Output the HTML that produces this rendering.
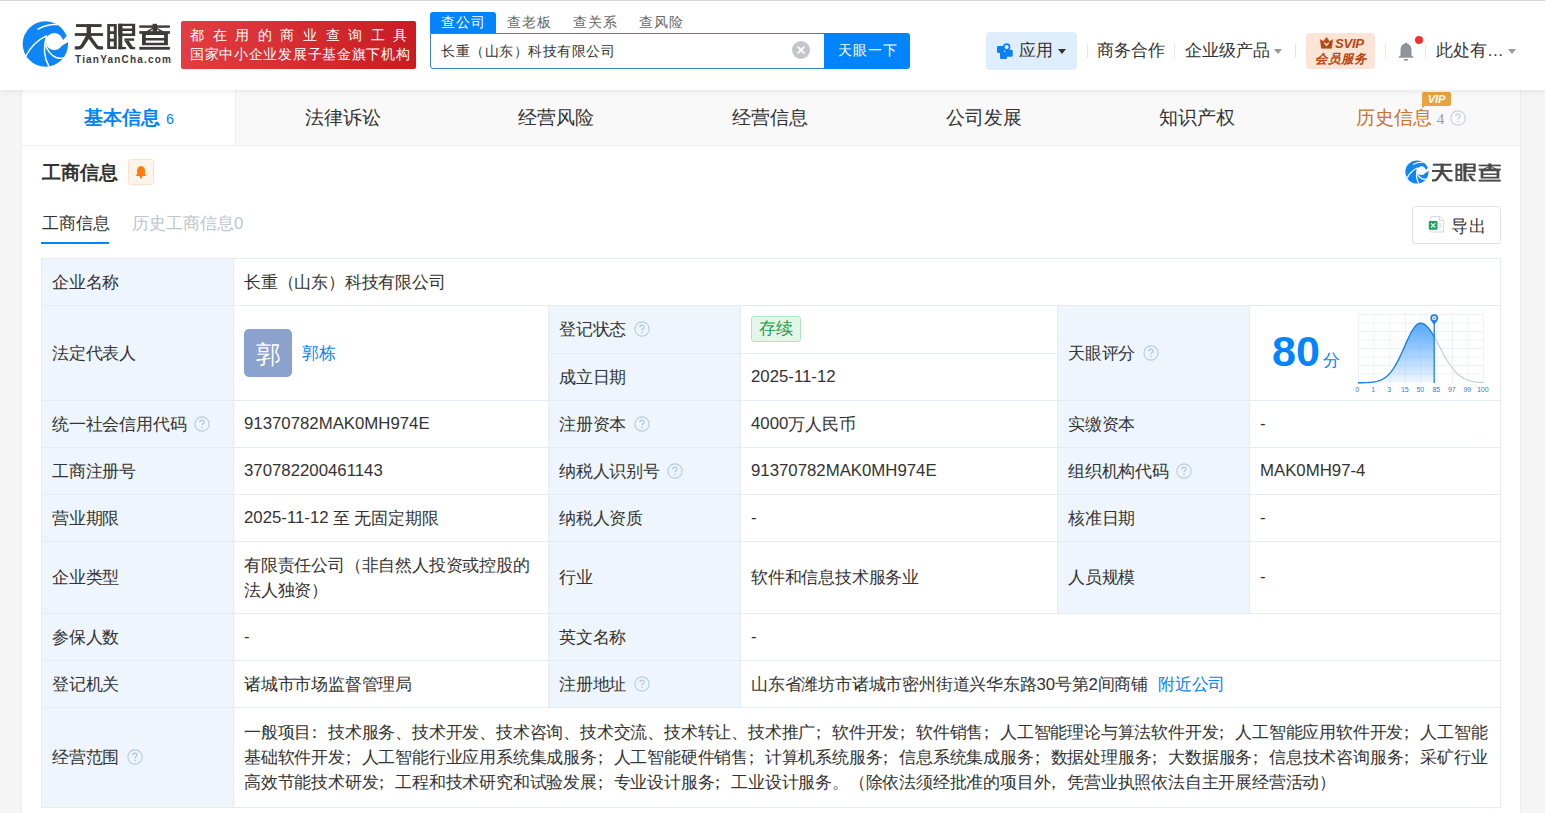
<!DOCTYPE html>
<html><head><meta charset="utf-8">
<style>
*{box-sizing:border-box;margin:0;padding:0}
html,body{width:1545px;height:813px;overflow:hidden}
body{position:relative;background:#f5f5f5;font-family:"Liberation Sans",sans-serif;color:#333}
.a{position:absolute;white-space:nowrap}
#hdr{position:absolute;z-index:5;left:0;top:0;width:1545px;height:90px;background:#fff;border-top:1px solid #d5d5d9;box-shadow:0 2px 6px rgba(0,0,0,.07)}
.sep{position:absolute;width:1px;height:14px;background:#e6e6e6;top:43px}
.caret{position:absolute;width:0;height:0;border-left:4px solid transparent;border-right:4px solid transparent;border-top:5px solid #333}
#card{position:absolute;left:21px;top:90px;width:1500px;height:723px;background:#fff;border-left:1px solid #ececec;border-right:1px solid #ececec}
#tabs{position:absolute;left:22px;top:90px;width:1498px;height:56px;background:#f9f9f9;border-bottom:1px solid #eeeeee}
.tab{position:absolute;top:0;height:56px;width:214px;text-align:center;font-size:19.2px;line-height:56px;color:#333}
.tb{position:absolute;background:#e4ebf3}
.lb{position:absolute;background:#eef5fd}
.c{position:absolute;font-size:16.8px;line-height:25px;color:#333;white-space:nowrap;display:flex;align-items:center;letter-spacing:-0.2px}
.lt{position:relative;top:-1px;letter-spacing:0}
.pl{position:relative;left:-5px}
.pr{position:relative;left:4px}
.q{display:inline-block;width:15px;height:15px;border:1.3px solid #bcd3ec;border-radius:50%;color:#bcd3ec;font-size:11px;line-height:12.5px;text-align:center;margin-left:7px;vertical-align:middle;font-weight:normal}
</style></head><body>

<div id="hdr">
  <!-- logo -->
  <svg class="a" style="left:20px;top:18px" width="51" height="50" viewBox="0 0 51 50"><circle cx="25.4" cy="25" r="22.7" fill="#0f86f7"/>
    <path d="M17.5 10.3 Q27 4.8 37.8 5.6" stroke="#fff" stroke-width="1.5" fill="none"/>
    <circle cx="34.3" cy="22.5" r="8.6" fill="#fff"/>
    <path d="M40.5 18 L43.2 21 L46.3 17.2 L48.6 18.5 L48.9 22.6 L47.7 23.2 L41.5 27 Z" fill="#fff"/>
    <path d="M5.5 37.5 Q13 23 26.8 16.6" stroke="#fff" stroke-width="1.5" fill="none"/>
    <path d="M26.6 17 C23.5 27 23.5 38 29 47.5" stroke="#fff" stroke-width="1.5" fill="none"/>
    <path d="M25.6 25.6 C27 31 31 36 36 38.5 C39 39.6 42 39.6 44.5 38.6" stroke="#fff" stroke-width="1.5" fill="none"/></svg>
  <svg class="a" style="left:70px;top:18px" width="105" height="34" viewBox="0 0 105 34"><g fill="#3e3a39"><rect x="6" y="5.1" width="25.6" height="2.9"/><rect x="4.8" y="14.1" width="28.3" height="2.8"/><rect x="16.6" y="5.1" width="4.4" height="11.8"/><path d="M15.9 16.8 L21 16.8 L13.3 28.2 Q11.6 30.6 9 30.6 L4.8 30.6 L4.8 27.2 L8.6 27.2 Q10 27.2 11 25.6 Z"/><path d="M18.6 19.8 L20.8 16.8 L27.4 26 Q28.4 27.2 30 27.2 L33.1 27.2 L33.1 30.6 L28.6 30.6 Q26.6 30.6 25.2 28.6 Z"/><path fill-rule="evenodd" d="M37.2 5.1 H46.8 V29.9 H37.2 Z M40.1 7.6 V12.2 H43.8 V7.6 Z M40.1 15 V19.8 H43.8 V15 Z M40.1 22.4 V27.6 H43.8 V22.4 Z"/><path fill-rule="evenodd" d="M48.3 4.8 H65.2 V17 H48.3 Z M52.3 6.9 V9.6 H62 V6.9 Z M52.3 12.1 V14.6 H62 V12.1 Z"/><rect x="48.3" y="4.8" width="4" height="25.4"/><rect x="48.3" y="27.9" width="7.6" height="2.3"/><rect x="54.4" y="19.4" width="9.8" height="2.4"/><path d="M54.4 21.8 L58.8 21.8 L63 27.9 L65.2 27.9 L65.2 30.2 L61 30.2 Q60 30.2 59.4 29.3 Z"/><rect x="82.6" y="4.8" width="4.4" height="7.8"/><rect x="69.3" y="6.4" width="30.6" height="2.4"/><rect x="69.3" y="12.1" width="30.6" height="2.7"/><path d="M82.6 8.8 L85 8.8 L77 13.9 L73.2 13.9 Z"/><path d="M84.6 8.8 L87 8.8 L96.4 13.9 L92.6 13.9 Z"/><path fill-rule="evenodd" d="M72 13.9 H97.9 V26.2 H72 Z M75.8 16 V19 H94.1 V16 Z M75.8 21.4 V23.8 H94.1 V21.4 Z"/><rect x="69.3" y="27.9" width="30.6" height="2.8"/></g></svg>
  <div class="a" style="left:75px;top:52px;font-size:10px;line-height:13px;font-weight:bold;color:#3e3a39;letter-spacing:1.2px">TianYanCha.com</div>
  <!-- red banner -->
  <div class="a" style="left:181px;top:20px;width:235px;height:48px;border-radius:2px;background:linear-gradient(90deg,#e23d42,#c81c22)"></div>
  <div class="a" style="left:190px;top:24px;font-size:14.4px;line-height:20px;color:#fff;letter-spacing:8.6px">都在用的商业查询工具</div>
  <div class="a" style="left:190px;top:43px;font-size:14.4px;line-height:20px;color:#fff;letter-spacing:0.7px">国家中小企业发展子基金旗下机构</div>
  <!-- search tabs -->
  <div class="a" style="left:430px;top:11px;width:66px;height:21px;background:#0084ff;border-radius:3px 3px 0 0"></div>
  <div class="a" style="left:441px;top:10.5px;font-size:14.4px;line-height:20px;color:#fff;letter-spacing:0.8px">查公司</div>
  <div class="a" style="left:507px;top:10.5px;font-size:14.4px;line-height:20px;color:#666;letter-spacing:0.8px">查老板</div>
  <div class="a" style="left:573px;top:10.5px;font-size:14.4px;line-height:20px;color:#666;letter-spacing:0.8px">查关系</div>
  <div class="a" style="left:639px;top:10.5px;font-size:14.4px;line-height:20px;color:#666;letter-spacing:0.8px">查风险</div>
  <div class="a" style="left:430px;top:32px;width:396px;height:36px;border:1px solid #3b7fcf;border-radius:0 0 0 3px;background:#fff"></div>
  <div class="a" style="left:441px;top:39.5px;font-size:14.4px;line-height:20px;color:#333;letter-spacing:0.5px">长重（山东）科技有限公司</div>
  <svg class="a" style="left:792px;top:40px" width="18" height="18" viewBox="0 0 18 18"><circle cx="9" cy="9" r="9" fill="#c5c6cb"/><path d="M5.6 5.6L12.4 12.4M12.4 5.6L5.6 12.4" stroke="#fff" stroke-width="1.6"/></svg>
  <div class="a" style="left:824px;top:32px;width:86px;height:36px;background:#0084ff;border-radius:0 3px 3px 0"></div>
  <div class="a" style="left:838px;top:38.5px;font-size:14.4px;line-height:20px;color:#fff;letter-spacing:0.9px">天眼一下</div>
  <!-- right nav -->
  <div class="a" style="left:986px;top:31px;width:91px;height:38px;background:#dfeefc;border-radius:4px"></div>
  <svg class="a" style="left:990px;top:36px" width="30" height="28" viewBox="0 0 30 28">
    <rect x="7" y="9" width="7.5" height="7" rx="1.2" fill="#0a80f5"/>
    <rect x="10" y="14.5" width="7" height="7.5" rx="1.2" fill="#0a80f5"/>
    <rect x="15.5" y="12.8" width="7.2" height="7" rx="1.2" fill="#0a80f5"/>
    <rect x="12" y="12" width="6" height="6" fill="#0a80f5"/>
    <circle cx="16.7" cy="10" r="3.7" fill="#0a80f5"/>
    <circle cx="16.7" cy="10" r="2" fill="#e8f3fd"/>
    <path d="M14 13.2 L15.8 14.8 L14 14.8 Z" fill="#e8f3fd"/>
  </svg>
  <div class="a" style="left:1019px;top:39px;font-size:16.8px;line-height:22px;color:#333">应用</div>
  <div class="caret" style="left:1058px;top:48px"></div>
  <div class="sep" style="left:1087px"></div>
  <div class="a" style="left:1097px;top:39px;font-size:16.8px;line-height:22px;color:#333">商务合作</div>
  <div class="sep" style="left:1174px"></div>
  <div class="a" style="left:1185px;top:39px;font-size:16.8px;line-height:22px;color:#333">企业级产品</div>
  <div class="caret" style="left:1274px;top:48px;border-top-color:#999"></div>
  <div class="sep" style="left:1295px"></div>
  <div class="a" style="left:1306px;top:32px;width:69px;height:36px;background:#fde4d7;border-radius:4px"></div>
  <svg class="a" style="left:1320px;top:36px" width="13" height="12" viewBox="0 0 13 12"><path d="M0.3 2.6 L3.6 4.6 L6.5 0.2 L9.4 4.6 L12.7 2.6 L11.6 11.3 L1.4 11.3 Z" fill="#b8470f" stroke="#b8470f" stroke-width="0.5" stroke-linejoin="round"/><path d="M4.3 5.6 L6.5 8.3 L8.7 5.6" stroke="#fde4d7" stroke-width="1.4" fill="none"/></svg>
  <div class="a" style="left:1335px;top:34.5px;font-size:13.2px;line-height:15px;font-weight:bold;font-style:italic;color:#b8470f;letter-spacing:-0.3px">SVIP</div>
  <div class="a" style="left:1315px;top:49.5px;font-size:12.5px;line-height:16px;font-weight:bold;font-style:italic;color:#b8470f">会员服务</div>
  <div class="sep" style="left:1385px"></div>
  <svg class="a" style="left:1398px;top:41px" width="16" height="19" viewBox="0 0 16 19"><path d="M8 0.5 Q9 0.5 9.2 1.5 Q13.5 2.8 13.5 8 L13.5 13.5 L15.5 15 L15.5 15.8 L0.5 15.8 L0.5 15 L2.5 13.5 L2.5 8 Q2.5 2.8 6.8 1.5 Q7 0.5 8 0.5 Z" fill="#909399"/><rect x="6" y="17" width="4" height="1.6" fill="#909399"/></svg>
  <div class="a" style="left:1415px;top:35px;width:8px;height:8px;border-radius:50%;background:#f23030"></div>
  <div class="sep" style="left:1425px"></div>
  <div class="a" style="left:1436px;top:39px;font-size:16.8px;line-height:22px;color:#333">此处有…</div>
  <div class="caret" style="left:1508px;top:48px;border-top-color:#999"></div>
</div>

<div id="card"></div>
<div id="tabs">
  <div class="a" style="left:0;top:0;width:214px;height:55px;background:#fff;border-right:1px solid #eee"></div>
  <div class="tab" style="left:0;color:#0084ff;font-weight:bold">基本信息<span style="font-size:14.4px;font-weight:normal;margin-left:6px">6</span></div>
  <div class="tab" style="left:214px">法律诉讼</div>
  <div class="tab" style="left:427px">经营风险</div>
  <div class="tab" style="left:641px">经营信息</div>
  <div class="tab" style="left:855px">公司发展</div>
  <div class="tab" style="left:1068px">知识产权</div>
  <div class="tab" style="left:1282px;color:#c8742a">历史信息<span style="font-size:15px;color:#999;margin-left:5px;font-family:'Liberation Serif',serif">4</span><span style="display:inline-block;width:22px"></span></div>
  <div class="a" style="left:1400px;top:2px;width:29px;height:14px;background:linear-gradient(90deg,#eba23a,#e6a240);border-radius:2px;color:#fff;font-size:11px;font-weight:bold;font-style:italic;line-height:14px;text-align:center">VIP</div>
  <svg class="a" style="left:1399px;top:14px" width="6" height="5" viewBox="0 0 6 5"><path d="M1 0 L1.2 4.5 L5.5 0 Z" fill="#eba23a"/></svg>
  <svg class="a" style="left:1428px;top:20px" width="16" height="16" viewBox="0 0 16 16"><circle cx="8" cy="8" r="7.2" fill="none" stroke="#ccd0d6" stroke-width="1.2"/><path d="M5.8 6.2 Q5.8 3.9 8 3.9 Q10.2 3.9 10.2 5.9 Q10.2 7.2 8.9 7.8 Q8 8.3 8 9.6" fill="none" stroke="#c6cbd2" stroke-width="1.2"/><circle cx="8" cy="11.6" r="0.8" fill="#c6cbd2"/></svg>
</div>

<!-- section title -->
<div class="a" style="left:42px;top:160px;font-size:19.2px;line-height:26px;font-weight:bold;color:#333">工商信息</div>
<div class="a" style="left:128px;top:159px;width:26px;height:26px;background:#fff4ea;border:1px solid #fde3cc;border-radius:3px"></div>
<svg class="a" style="left:134px;top:165px" width="14" height="14" viewBox="0 0 14 14"><path d="M7 1 Q11 1.5 11 6 L11 9.5 L12.5 11 L1.5 11 L3 9.5 L3 6 Q3 1.5 7 1 Z" fill="#ff7b0a"/><circle cx="7" cy="12" r="1.4" fill="#ff7b0a"/></svg>
<svg class="a" style="left:1404px;top:159px" width="26" height="26" viewBox="0 0 51 50"><circle cx="25.4" cy="25" r="22.7" fill="#0f86f7"/>
    <path d="M17.5 10.3 Q27 4.8 37.8 5.6" stroke="#fff" stroke-width="2.4" fill="none"/>
    <circle cx="34.3" cy="22.5" r="8.6" fill="#fff"/>
    <path d="M40.5 18 L43.2 21 L46.3 17.2 L48.6 18.5 L48.9 22.6 L47.7 23.2 L41.5 27 Z" fill="#fff"/>
    <path d="M5.5 37.5 Q13 23 26.8 16.6" stroke="#fff" stroke-width="2.4" fill="none"/>
    <path d="M26.6 17 C23.5 27 23.5 38 29 47.5" stroke="#fff" stroke-width="2.4" fill="none"/>
    <path d="M25.6 25.6 C27 31 31 36 36 38.5 C39 39.6 42 39.6 44.5 38.6" stroke="#fff" stroke-width="2.4" fill="none"/></svg>
<svg class="a" style="left:0;top:0" width="1545" height="200"><g fill="#4a4a4a" transform="translate(1428.527 160.146) scale(0.7234 0.6988)"><rect x="6" y="5.1" width="25.6" height="2.9"/><rect x="4.8" y="14.1" width="28.3" height="2.8"/><rect x="16.6" y="5.1" width="4.4" height="11.8"/><path d="M15.9 16.8 L21 16.8 L13.3 28.2 Q11.6 30.6 9 30.6 L4.8 30.6 L4.8 27.2 L8.6 27.2 Q10 27.2 11 25.6 Z"/><path d="M18.6 19.8 L20.8 16.8 L27.4 26 Q28.4 27.2 30 27.2 L33.1 27.2 L33.1 30.6 L28.6 30.6 Q26.6 30.6 25.2 28.6 Z"/><path fill-rule="evenodd" d="M37.2 5.1 H46.8 V29.9 H37.2 Z M40.1 7.6 V12.2 H43.8 V7.6 Z M40.1 15 V19.8 H43.8 V15 Z M40.1 22.4 V27.6 H43.8 V22.4 Z"/><path fill-rule="evenodd" d="M48.3 4.8 H65.2 V17 H48.3 Z M52.3 6.9 V9.6 H62 V6.9 Z M52.3 12.1 V14.6 H62 V12.1 Z"/><rect x="48.3" y="4.8" width="4" height="25.4"/><rect x="48.3" y="27.9" width="7.6" height="2.3"/><rect x="54.4" y="19.4" width="9.8" height="2.4"/><path d="M54.4 21.8 L58.8 21.8 L63 27.9 L65.2 27.9 L65.2 30.2 L61 30.2 Q60 30.2 59.4 29.3 Z"/><rect x="82.6" y="4.8" width="4.4" height="7.8"/><rect x="69.3" y="6.4" width="30.6" height="2.4"/><rect x="69.3" y="12.1" width="30.6" height="2.7"/><path d="M82.6 8.8 L85 8.8 L77 13.9 L73.2 13.9 Z"/><path d="M84.6 8.8 L87 8.8 L96.4 13.9 L92.6 13.9 Z"/><path fill-rule="evenodd" d="M72 13.9 H97.9 V26.2 H72 Z M75.8 16 V19 H94.1 V16 Z M75.8 21.4 V23.8 H94.1 V21.4 Z"/><rect x="69.3" y="27.9" width="30.6" height="2.8"/></g></svg>

<!-- subtabs -->
<div class="a" style="left:41.5px;top:212px;font-size:16.8px;line-height:24px;color:#333">工商信息</div>
<div class="a" style="left:41px;top:242px;width:68px;height:2px;background:#0084ff"></div>
<div class="a" style="left:132px;top:212px;font-size:16.8px;line-height:24px;color:#c0c4cc">历史工商信息0</div>
<div class="a" style="left:1412px;top:206px;width:89px;height:38px;border:1px solid #e1e3e8;border-radius:3px"></div>
<svg class="a" style="left:1428px;top:215px" width="18" height="19" viewBox="0 0 18 19"><path d="M2.8 1.5 L12 1.5 L15.6 5.1 L15.6 17 L2.8 17 Z" fill="#fff" stroke="#d5d7dc" stroke-width="1"/><path d="M11.5 1.5 L11.5 5.5 L15.6 5.5" fill="none" stroke="#d5d7dc" stroke-width="0.9"/><rect x="0.8" y="6" width="8.7" height="8.7" rx="1" fill="#23a05a"/><path d="M3 8.2 L7.3 12.5 M7.3 8.2 L3 12.5" stroke="#c8ffe0" stroke-width="1.3"/><path d="M10.8 8.8h2.6M10.8 10.6h2.6M10.8 12.4h2.6" stroke="#d5d7dc" stroke-width="0.9"/></svg>
<div class="a" style="left:1451px;top:215px;font-size:16.8px;line-height:24px;color:#333;letter-spacing:1px">导出</div>

<!-- TABLE -->
<div class="lb" style="left:41px;top:258px;width:192px;height:549px"></div>
<div class="lb" style="left:548px;top:305px;width:192px;height:402px"></div>
<div class="lb" style="left:1057px;top:305px;width:192px;height:308px"></div>
<div class="tb" style="left:41px;top:258px;width:1460px;height:1px"></div>
<div class="tb" style="left:41px;top:305px;width:1460px;height:1px"></div>
<div class="tb" style="left:548px;top:353px;width:510px;height:1px"></div>
<div class="tb" style="left:41px;top:400px;width:1460px;height:1px"></div>
<div class="tb" style="left:41px;top:447px;width:1460px;height:1px"></div>
<div class="tb" style="left:41px;top:494px;width:1460px;height:1px"></div>
<div class="tb" style="left:41px;top:541px;width:1460px;height:1px"></div>
<div class="tb" style="left:41px;top:613px;width:1460px;height:1px"></div>
<div class="tb" style="left:41px;top:660px;width:1460px;height:1px"></div>
<div class="tb" style="left:41px;top:707px;width:1460px;height:1px"></div>
<div class="tb" style="left:41px;top:807px;width:1460px;height:1px"></div>
<div class="tb" style="left:41px;top:258px;width:1px;height:550px"></div>
<div class="tb" style="left:1500px;top:258px;width:1px;height:550px"></div>
<div class="tb" style="left:233px;top:258px;width:1px;height:550px"></div>
<div class="tb" style="left:548px;top:305px;width:1px;height:403px"></div>
<div class="tb" style="left:740px;top:305px;width:1px;height:403px"></div>
<div class="tb" style="left:1057px;top:305px;width:1px;height:309px"></div>
<div class="tb" style="left:1249px;top:305px;width:1px;height:309px"></div>
<div class="c" style="left:42px;top:259px;width:191px;height:46px;padding-left:10px;"><div>企业名称</div></div>
<div class="c" style="left:234px;top:259px;width:1266px;height:46px;padding-left:10px;"><div>长重（山东）科技有限公司</div></div>
<div class="c" style="left:42px;top:306px;width:191px;height:94px;padding-left:10px;"><div>法定代表人</div></div>
<div class="c" style="left:234px;top:306px;width:314px;height:94px;padding-left:10px;"><div><span style="display:inline-block;vertical-align:middle;width:48px;height:48px;border-radius:5px;background:#8ba3cc;color:#fff;font-size:25px;line-height:50px;text-align:center">郭</span><span style="color:#0084ff;margin-left:10px;vertical-align:middle;position:relative;top:0px">郭栋</span></div></div>
<div class="c" style="left:549px;top:306px;width:191px;height:47px;padding-left:10px;"><div>登记状态<svg style="margin-left:7.5px;vertical-align:-2px" width="16" height="16" viewBox="0 0 16 16"><circle cx="8" cy="8" r="7.1" fill="none" stroke="#b5cce6" stroke-width="1.1"/><path d="M5.9 6.3 Q5.9 4.1 8 4.1 Q10.1 4.1 10.1 6 Q10.1 7.1 8.9 7.7 Q8 8.2 8 9.5" fill="none" stroke="#adc5e0" stroke-width="1.2"/><circle cx="8" cy="11.5" r="0.8" fill="#adc5e0"/></svg></div></div>
<div class="c" style="left:741px;top:306px;width:316px;height:47px;padding-left:10px;"><div><span style="display:inline-block;height:26px;padding:0 7px;line-height:24px;border:1px solid #b4e3c0;background:#e2f7e7;color:#1f9d4b;border-radius:3px;position:relative;top:-1px">存续</span></div></div>
<div class="c" style="left:549px;top:354px;width:191px;height:46px;padding-left:10px;"><div>成立日期</div></div>
<div class="c" style="left:741px;top:354px;width:316px;height:46px;padding-left:10px;"><div><span class=lt>2025-11-12</span></div></div>
<div class="c" style="left:1058px;top:306px;width:191px;height:94px;padding-left:10px;"><div>天眼评分<svg style="margin-left:7.5px;vertical-align:-2px" width="16" height="16" viewBox="0 0 16 16"><circle cx="8" cy="8" r="7.1" fill="none" stroke="#b5cce6" stroke-width="1.1"/><path d="M5.9 6.3 Q5.9 4.1 8 4.1 Q10.1 4.1 10.1 6 Q10.1 7.1 8.9 7.7 Q8 8.2 8 9.5" fill="none" stroke="#adc5e0" stroke-width="1.2"/><circle cx="8" cy="11.5" r="0.8" fill="#adc5e0"/></svg></div></div>
<div class="c" style="left:42px;top:401px;width:191px;height:46px;padding-left:10px;"><div>统一社会信用代码<svg style="margin-left:7.5px;vertical-align:-2px" width="16" height="16" viewBox="0 0 16 16"><circle cx="8" cy="8" r="7.1" fill="none" stroke="#b5cce6" stroke-width="1.1"/><path d="M5.9 6.3 Q5.9 4.1 8 4.1 Q10.1 4.1 10.1 6 Q10.1 7.1 8.9 7.7 Q8 8.2 8 9.5" fill="none" stroke="#adc5e0" stroke-width="1.2"/><circle cx="8" cy="11.5" r="0.8" fill="#adc5e0"/></svg></div></div>
<div class="c" style="left:234px;top:401px;width:314px;height:46px;padding-left:10px;"><div><span class=lt>91370782MAK0MH974E</span></div></div>
<div class="c" style="left:549px;top:401px;width:191px;height:46px;padding-left:10px;"><div>注册资本<svg style="margin-left:7.5px;vertical-align:-2px" width="16" height="16" viewBox="0 0 16 16"><circle cx="8" cy="8" r="7.1" fill="none" stroke="#b5cce6" stroke-width="1.1"/><path d="M5.9 6.3 Q5.9 4.1 8 4.1 Q10.1 4.1 10.1 6 Q10.1 7.1 8.9 7.7 Q8 8.2 8 9.5" fill="none" stroke="#adc5e0" stroke-width="1.2"/><circle cx="8" cy="11.5" r="0.8" fill="#adc5e0"/></svg></div></div>
<div class="c" style="left:741px;top:401px;width:316px;height:46px;padding-left:10px;"><div><span class=lt>4000</span>万人民币</div></div>
<div class="c" style="left:1058px;top:401px;width:191px;height:46px;padding-left:10px;"><div>实缴资本</div></div>
<div class="c" style="left:1250px;top:401px;width:250px;height:46px;padding-left:10px;"><div><span class=lt>-</span></div></div>
<div class="c" style="left:42px;top:448px;width:191px;height:46px;padding-left:10px;"><div>工商注册号</div></div>
<div class="c" style="left:234px;top:448px;width:314px;height:46px;padding-left:10px;"><div><span class=lt>370782200461143</span></div></div>
<div class="c" style="left:549px;top:448px;width:191px;height:46px;padding-left:10px;"><div>纳税人识别号<svg style="margin-left:7.5px;vertical-align:-2px" width="16" height="16" viewBox="0 0 16 16"><circle cx="8" cy="8" r="7.1" fill="none" stroke="#b5cce6" stroke-width="1.1"/><path d="M5.9 6.3 Q5.9 4.1 8 4.1 Q10.1 4.1 10.1 6 Q10.1 7.1 8.9 7.7 Q8 8.2 8 9.5" fill="none" stroke="#adc5e0" stroke-width="1.2"/><circle cx="8" cy="11.5" r="0.8" fill="#adc5e0"/></svg></div></div>
<div class="c" style="left:741px;top:448px;width:316px;height:46px;padding-left:10px;"><div><span class=lt>91370782MAK0MH974E</span></div></div>
<div class="c" style="left:1058px;top:448px;width:191px;height:46px;padding-left:10px;"><div>组织机构代码<svg style="margin-left:7.5px;vertical-align:-2px" width="16" height="16" viewBox="0 0 16 16"><circle cx="8" cy="8" r="7.1" fill="none" stroke="#b5cce6" stroke-width="1.1"/><path d="M5.9 6.3 Q5.9 4.1 8 4.1 Q10.1 4.1 10.1 6 Q10.1 7.1 8.9 7.7 Q8 8.2 8 9.5" fill="none" stroke="#adc5e0" stroke-width="1.2"/><circle cx="8" cy="11.5" r="0.8" fill="#adc5e0"/></svg></div></div>
<div class="c" style="left:1250px;top:448px;width:250px;height:46px;padding-left:10px;"><div><span class=lt>MAK0MH97-4</span></div></div>
<div class="c" style="left:42px;top:495px;width:191px;height:46px;padding-left:10px;"><div>营业期限</div></div>
<div class="c" style="left:234px;top:495px;width:314px;height:46px;padding-left:10px;"><div><span class=lt>2025-11-12</span> 至 无固定期限</div></div>
<div class="c" style="left:549px;top:495px;width:191px;height:46px;padding-left:10px;"><div>纳税人资质</div></div>
<div class="c" style="left:741px;top:495px;width:316px;height:46px;padding-left:10px;"><div><span class=lt>-</span></div></div>
<div class="c" style="left:1058px;top:495px;width:191px;height:46px;padding-left:10px;"><div>核准日期</div></div>
<div class="c" style="left:1250px;top:495px;width:250px;height:46px;padding-left:10px;"><div><span class=lt>-</span></div></div>
<div class="c" style="left:42px;top:542px;width:191px;height:71px;padding-left:10px;"><div>企业类型</div></div>
<div class="c" style="left:234px;top:542px;width:314px;height:71px;padding-left:10px;"><div><div style="white-space:normal;width:300px">有限责任公司（非自然人投资或控股的法人独资）</div></div></div>
<div class="c" style="left:549px;top:542px;width:191px;height:71px;padding-left:10px;"><div>行业</div></div>
<div class="c" style="left:741px;top:542px;width:316px;height:71px;padding-left:10px;"><div>软件和信息技术服务业</div></div>
<div class="c" style="left:1058px;top:542px;width:191px;height:71px;padding-left:10px;"><div>人员规模</div></div>
<div class="c" style="left:1250px;top:542px;width:250px;height:71px;padding-left:10px;"><div><span class=lt>-</span></div></div>
<div class="c" style="left:42px;top:614px;width:191px;height:46px;padding-left:10px;"><div>参保人数</div></div>
<div class="c" style="left:234px;top:614px;width:314px;height:46px;padding-left:10px;"><div><span class=lt>-</span></div></div>
<div class="c" style="left:549px;top:614px;width:191px;height:46px;padding-left:10px;"><div>英文名称</div></div>
<div class="c" style="left:741px;top:614px;width:759px;height:46px;padding-left:10px;"><div><span class=lt>-</span></div></div>
<div class="c" style="left:42px;top:661px;width:191px;height:46px;padding-left:10px;"><div>登记机关</div></div>
<div class="c" style="left:234px;top:661px;width:314px;height:46px;padding-left:10px;"><div>诸城市市场监督管理局</div></div>
<div class="c" style="left:549px;top:661px;width:191px;height:46px;padding-left:10px;"><div>注册地址<svg style="margin-left:7.5px;vertical-align:-2px" width="16" height="16" viewBox="0 0 16 16"><circle cx="8" cy="8" r="7.1" fill="none" stroke="#b5cce6" stroke-width="1.1"/><path d="M5.9 6.3 Q5.9 4.1 8 4.1 Q10.1 4.1 10.1 6 Q10.1 7.1 8.9 7.7 Q8 8.2 8 9.5" fill="none" stroke="#adc5e0" stroke-width="1.2"/><circle cx="8" cy="11.5" r="0.8" fill="#adc5e0"/></svg></div></div>
<div class="c" style="left:741px;top:661px;width:759px;height:46px;padding-left:10px;"><div>山东省潍坊市诸城市密州街道兴华东路30号第2间商铺<span style="color:#0084ff;margin-left:10px">附近公司</span></div></div>
<div class="c" style="left:42px;top:708px;width:191px;height:99px;padding-left:10px;"><div>经营范围<svg style="margin-left:7.5px;vertical-align:-2px" width="16" height="16" viewBox="0 0 16 16"><circle cx="8" cy="8" r="7.1" fill="none" stroke="#b5cce6" stroke-width="1.1"/><path d="M5.9 6.3 Q5.9 4.1 8 4.1 Q10.1 4.1 10.1 6 Q10.1 7.1 8.9 7.7 Q8 8.2 8 9.5" fill="none" stroke="#adc5e0" stroke-width="1.2"/><circle cx="8" cy="11.5" r="0.8" fill="#adc5e0"/></svg></div></div>
<div class="c" style="left:234px;top:708px;width:1266px;height:99px;padding-left:10px;"><div><div style="white-space:normal;width:1250px;line-height:25.2px">一般项目<span class=pl>：</span>技术服务、技术开发、技术咨询、技术交流、技术转让、技术推广<span class=pl>；</span>软件开发<span class=pl>；</span>软件销售<span class=pl>；</span>人工智能理论与算法软件开发<span class=pl>；</span>人工智能应用软件开发<span class=pl>；</span>人工智能基础软件开发<span class=pl>；</span>人工智能行业应用系统集成服务<span class=pl>；</span>人工智能硬件销售<span class=pl>；</span>计算机系统服务<span class=pl>；</span>信息系统集成服务<span class=pl>；</span>数据处理服务<span class=pl>；</span>大数据服务<span class=pl>；</span>信息技术咨询服务<span class=pl>；</span>采矿行业高效节能技术研发<span class=pl>；</span>工程和技术研究和试验发展<span class=pl>；</span>专业设计服务<span class=pl>；</span>工业设计服务。（除依法须经批准的项目外<span class=pl>，</span>凭营业执照依法自主开展经营活动）</div></div></div>
<div class="a" style="left:1272px;top:326px;font-size:43px;line-height:50px;font-weight:bold;color:#0084ff">80</div>
<div class="a" style="left:1323px;top:349px;font-size:16.8px;line-height:24px;color:#0084ff">分</div>
<svg class="a" style="left:1352px;top:310px" width="142" height="86" viewBox="0 0 142 86">
<defs><linearGradient id="g" x1="0" y1="0" x2="0" y2="1"><stop offset="0" stop-color="#4aa3ff" stop-opacity=".95"/><stop offset="1" stop-color="#4aa3ff" stop-opacity=".08"/></linearGradient></defs>
<g stroke="#eef2f8" stroke-width="1">
<path d="M6 4.5H131.5M6 13H131.5M6 21.5H131.5M6 30H131.5M6 38.5H131.5M6 47H131.5M6 55.5H131.5M6 64H131.5"/>
<path d="M6.5 4V73M22 4V73M38 4V73M53.5 4V73M69 4V73M85 4V73M100.5 4V73M116 4V73M131.5 4V73"/>
</g>
<path d="M6.00 72.77 L7.27 72.76 L8.54 72.75 L9.81 72.73 L11.08 72.70 L12.35 72.67 L13.62 72.63 L14.89 72.58 L16.16 72.52 L17.43 72.43 L18.70 72.33 L19.97 72.20 L21.24 72.04 L22.51 71.84 L23.78 71.60 L25.05 71.31 L26.32 70.95 L27.59 70.53 L28.86 70.03 L30.13 69.44 L31.40 68.75 L32.67 67.94 L33.94 67.02 L35.21 65.96 L36.48 64.75 L37.75 63.40 L39.02 61.88 L40.29 60.20 L41.56 58.36 L42.83 56.34 L44.10 54.17 L45.37 51.84 L46.64 49.36 L47.91 46.76 L49.18 44.05 L50.45 41.26 L51.72 38.41 L52.99 35.54 L54.26 32.69 L55.53 29.89 L56.80 27.18 L58.07 24.61 L59.34 22.21 L60.61 20.02 L61.88 18.09 L63.15 16.44 L64.42 15.11 L65.69 14.11 L66.96 13.48 L68.23 13.21 L69.50 13.28 L70.77 13.62 L72.04 14.23 L73.31 15.08 L74.58 16.17 L75.85 17.50 L77.12 19.03 L78.39 20.75 L79.66 22.64 L80.93 24.68 L82.20 26.84 L82.2 72.8 Z" fill="url(#g)"/>
<path d="M6.00 72.77 L7.27 72.76 L8.54 72.75 L9.81 72.73 L11.08 72.70 L12.35 72.67 L13.62 72.63 L14.89 72.58 L16.16 72.52 L17.43 72.43 L18.70 72.33 L19.97 72.20 L21.24 72.04 L22.51 71.84 L23.78 71.60 L25.05 71.31 L26.32 70.95 L27.59 70.53 L28.86 70.03 L30.13 69.44 L31.40 68.75 L32.67 67.94 L33.94 67.02 L35.21 65.96 L36.48 64.75 L37.75 63.40 L39.02 61.88 L40.29 60.20 L41.56 58.36 L42.83 56.34 L44.10 54.17 L45.37 51.84 L46.64 49.36 L47.91 46.76 L49.18 44.05 L50.45 41.26 L51.72 38.41 L52.99 35.54 L54.26 32.69 L55.53 29.89 L56.80 27.18 L58.07 24.61 L59.34 22.21 L60.61 20.02 L61.88 18.09 L63.15 16.44 L64.42 15.11 L65.69 14.11 L66.96 13.48 L68.23 13.21 L69.50 13.28 L70.77 13.62 L72.04 14.23 L73.31 15.08 L74.58 16.17 L75.85 17.50 L77.12 19.03 L78.39 20.75 L79.66 22.64 L80.93 24.68 L82.20 26.84" stroke="#1f7ee8" stroke-width="1.4" fill="none"/>
<path d="M82.20 26.84 L83.43 29.04 L84.67 31.30 L85.90 33.61 L87.13 35.95 L88.36 38.29 L89.59 40.62 L90.83 42.92 L92.06 45.17 L93.29 47.36 L94.53 49.47 L95.76 51.50 L96.99 53.44 L98.22 55.27 L99.45 56.99 L100.69 58.61 L101.92 60.11 L103.15 61.50 L104.39 62.78 L105.62 63.96 L106.85 65.03 L108.08 66.00 L109.31 66.87 L110.55 67.65 L111.78 68.35 L113.01 68.97 L114.25 69.52 L115.48 70.00 L116.71 70.42 L117.94 70.78 L119.18 71.10 L120.41 71.37 L121.64 71.61 L122.87 71.81 L124.10 71.98 L125.34 72.12 L126.57 72.24 L127.80 72.34 L129.03 72.43 L130.27 72.50 L131.50 72.56" stroke="#c9ced6" stroke-width="1.2" fill="none"/>
<line x1="82.2" y1="12" x2="82.2" y2="73" stroke="#1f7ee8" stroke-width="1.3"/>
<path d="M82.2 14.6 C80.6 12.6 78.3 10.6 78.3 8.2 A3.9 3.9 0 1 1 86.1 8.2 C86.1 10.6 83.8 12.6 82.2 14.6 Z" fill="#1f7ee8"/><circle cx="82.2" cy="8.2" r="2.1" fill="#fff"/><circle cx="82.2" cy="8.2" r="0.8" fill="#1d4f9a"/>
<g fill="#1f7ee8" font-size="7" font-family="Liberation Sans" text-anchor="middle" transform="translate(-0.7 0)">
<text x="6" y="82">0</text><text x="22" y="82">1</text><text x="38" y="82">3</text><text x="53.5" y="82">15</text><text x="69" y="82">50</text><text x="85" y="82">85</text><text x="100.5" y="82">97</text><text x="116" y="82">99</text><text x="131.5" y="82">100</text>
</g></svg>
</body></html>
